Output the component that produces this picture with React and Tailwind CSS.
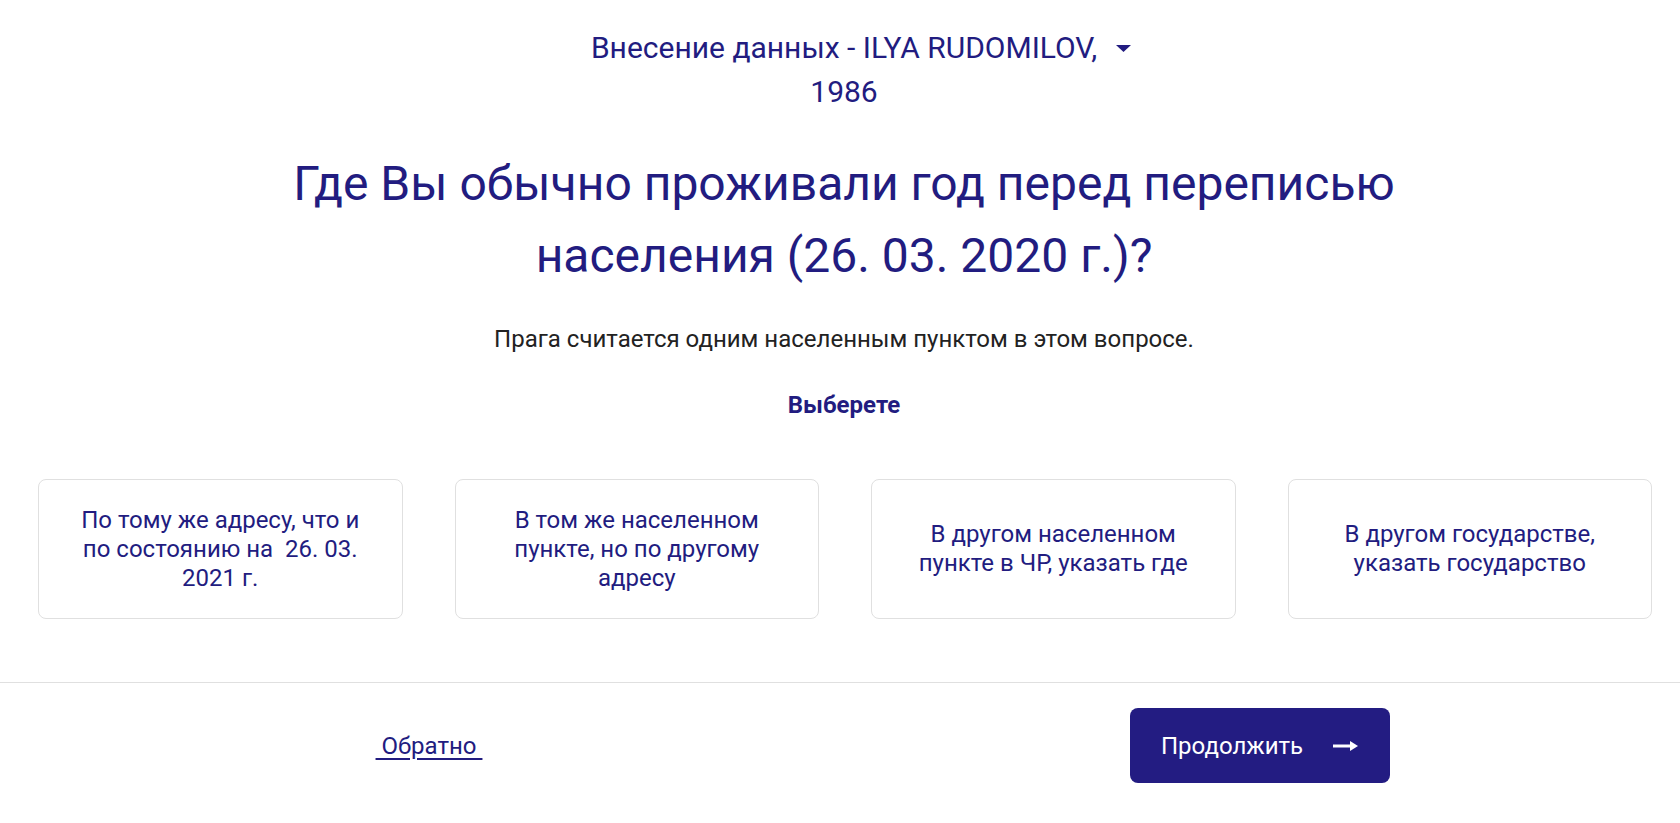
import React from "react";

const options = [
  "По тому же адресу, что и по состоянию на \u00a026. 03. 2021 г.",
  "В том же населенном пункте, но по другому адресу",
  "В другом населенном пункте в ЧР, указать где",
  "В другом государстве, указать государство",
];

const App = () => {
  return (
    <div className="min-h-screen bg-white font-['Roboto',sans-serif] text-[#221c80]">
      {/* Header */}
      <div className="flex justify-center pt-[26px] pl-[8px]">
        <div className="relative w-[536px] text-center text-[30px] leading-[44px]">
          Внесение данных - ILYA RUDOMILOV, 1986
          <svg
            className="absolute left-full top-[19px] ml-[4px]"
            width="15"
            height="7"
            viewBox="0 0 15 7"
          >
            <path d="M0 0 L15 0 L7.5 7 Z" fill="#221c80" />
          </svg>
        </div>
      </div>

      <div className="pl-[8px]">
        {/* Question */}
        <h1 className="mx-auto mt-[34px] max-w-[1120px] text-center text-[48px] leading-[72px] font-normal">
          Где Вы обычно проживали год перед переписью населения (26. 03. 2020 г.)?
        </h1>

        <p className="mt-[29px] text-center text-[24px] leading-[36px] text-[#222222]">
          Прага считается одним населенным пунктом в этом вопросе.
        </p>

        <p className="mt-[30px] text-center text-[24px] leading-[36px] font-bold">
          Выберете
        </p>
      </div>

      {/* Options */}
      <div className="mt-[56px] grid grid-cols-4 gap-[52px] pl-[38px] pr-[28px]">
        {options.map((text) => (
          <button
            key={text}
            className="flex h-[140px] items-center justify-center rounded-[8px] border border-[#e0e0e0] bg-white px-[32px] text-center text-[24px] leading-[29px] text-[#221c80]"
          >
            {text}
          </button>
        ))}
      </div>

      {/* Footer */}
      <div className="mt-[63px] grid grid-cols-2 border-t border-[#e0e0e0] pt-[25px]">
        <div className="flex items-center justify-center pl-[18px]">
          <a href="#" className="text-[24px] leading-[30px] underline underline-offset-[4px]">
            {"\u00a0Обратно\u00a0"}
          </a>
        </div>
        <div className="flex items-center justify-center">
          <button className="flex h-[75px] w-[260px] items-center gap-[30px] rounded-[8px] bg-[#231c82] pl-[31px] text-[24px] text-white">
            Продолжить
            <svg width="25" height="12" viewBox="0 0 25 12">
              <path d="M0 6 L19 6" stroke="white" strokeWidth="3" />
              <path d="M17 1 L25 6 L17 11 Z" fill="white" />
            </svg>
          </button>
        </div>
      </div>
    </div>
  );
};

export default App;
